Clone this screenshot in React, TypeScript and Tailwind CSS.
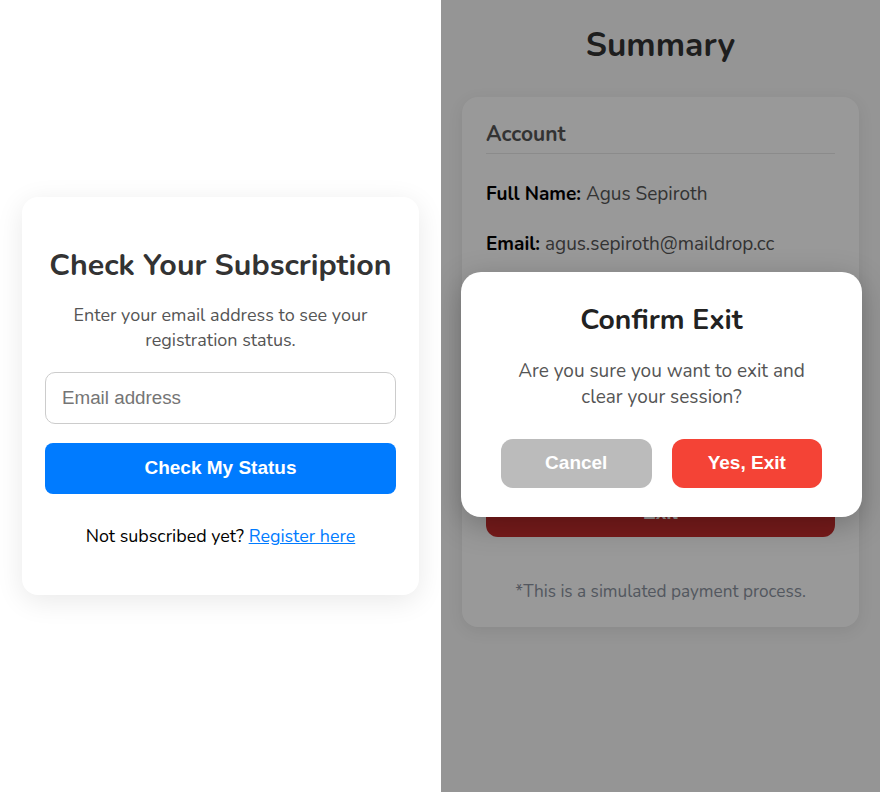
import { useState } from "react";

const nunito = "font-['Nunito','Lato',sans-serif]";
const arial = "font-['Liberation_Sans',Arial,sans-serif]";

function CheckSubscription() {
  const [email, setEmail] = useState("");

  return (
    <div className="w-[441px] h-[792px] shrink-0 bg-white flex items-center justify-center">
      <div
        className={`w-[397px] bg-white rounded-2xl px-[23px] pt-[51px] pb-[47px] text-center shadow-[0_6px_28px_rgba(0,0,0,0.09)] ${nunito}`}
      >
        <h2 className="text-[30.4px] leading-[34px] font-bold text-[#333]">Check Your Subscription</h2>
        <p className="mt-[21px] text-[18px] leading-[25px] text-[#555]">
          Enter your email address to see your registration status.
        </p>
        <input
          type="email"
          value={email}
          onChange={(e) => setEmail(e.target.value)}
          placeholder="Email address"
          className={`mt-[19px] block w-full h-[52px] px-4 rounded-[10px] border border-[#ccc] text-[18.8px] text-[#333] placeholder:text-[#757575] outline-none ${arial}`}
        />
        <button
          className={`mt-[19px] w-full h-[51px] rounded-lg bg-[#007bff] text-white text-[19px] font-bold ${arial}`}
        >
          Check My Status
        </button>
        <p className="mt-[30px] text-[17.9px] leading-6 text-black">
          Not subscribed yet?{" "}
          <a href="#" className="text-[#007bff] underline">
            Register here
          </a>
        </p>
      </div>
    </div>
  );
}

function Summary() {
  return (
    <div className={`relative w-[439px] h-[792px] shrink-0 bg-[#f8f8f8] overflow-hidden ${nunito}`}>
      <div className="flex flex-col items-center pt-[25px]">
        <h1 className="text-[33.5px] leading-10 font-bold text-[#333]">Summary</h1>
        <div className="mt-[32px] w-[397px] bg-white rounded-2xl px-6 pt-[23px] pb-[23px] shadow-[0_4px_16px_rgba(0,0,0,0.08)]">
          <h3 className="text-[21px] leading-7 font-bold text-[#555] pb-[5px] border-b border-[#e8e8e8]">Account</h3>
          <p className="mt-[27px] text-[19px] leading-[26px] text-[#555]">
            <span className="font-bold text-black">Full Name:</span> Agus Sepiroth
          </p>
          <p className="mt-[24px] text-[19px] leading-[26px] text-[#555]">
            <span className="font-bold text-black">Email:</span> agus.sepiroth@maildrop.cc
          </p>
          <h3 className="mt-[26px] text-[21px] leading-7 font-bold text-[#555] pb-[5px] border-b border-[#e8e8e8]">Subscription</h3>
          <p className="mt-[20px] text-[19px] leading-[26px] text-[#555]">
            <span className="font-bold text-black">Plan:</span> Premium Monthly
          </p>
          <p className="mt-[20px] text-[19px] leading-[26px] text-[#555]">
            <span className="font-bold text-black">Amount:</span> $9.99
          </p>
          <p className="mt-[20px] text-[19px] leading-[26px] text-[#555]">
            <span className="font-bold text-black">Status:</span> Paid
          </p>
          <button className={`mt-[34px] w-full h-12 rounded-xl bg-[#c62d2d] text-white text-[19px] font-bold ${arial}`}>
            Exit
          </button>
          <p className="mt-[43px] text-center text-[17.2px] leading-6 text-[#8a929e]">
            *This is a simulated payment process.
          </p>
        </div>
      </div>

      <div className="absolute inset-0 bg-black/40 flex items-center justify-center">
        <div className="mb-[3px] ml-[2px] w-[401px] bg-white rounded-[20px] pt-[31px] pb-[29px] px-10 text-center shadow-[0_8px_30px_rgba(0,0,0,0.25)]">
          <h2 className="text-[28.3px] leading-[34px] font-bold text-[#222]">Confirm Exit</h2>
          <p className="mt-[21px] text-[19px] leading-[26px] text-[#555]">
            Are you sure you want to exit and clear your session?
          </p>
          <div className="mt-[29px] flex justify-center gap-5">
            <button className={`w-[153px] h-[49px] rounded-xl bg-[#bbb] text-white text-[19px] font-bold ${arial}`}>
              Cancel
            </button>
            <button className={`w-[153px] h-[49px] rounded-xl bg-[#f44336] text-white text-[19px] font-bold ${arial}`}>
              Yes, Exit
            </button>
          </div>
        </div>
      </div>
    </div>
  );
}

export default function App() {
  return (
    <div className="flex w-[880px] h-[792px] overflow-hidden">
      <CheckSubscription />
      <Summary />
    </div>
  );
}
